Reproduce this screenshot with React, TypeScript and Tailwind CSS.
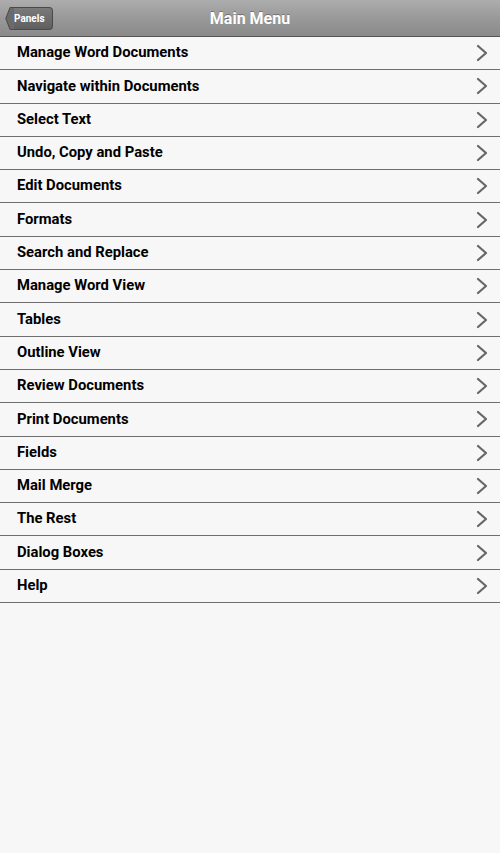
const items = [
  'Manage Word Documents',
  'Navigate within Documents',
  'Select Text',
  'Undo, Copy and Paste',
  'Edit Documents',
  'Formats',
  'Search and Replace',
  'Manage Word View',
  'Tables',
  'Outline View',
  'Review Documents',
  'Print Documents',
  'Fields',
  'Mail Merge',
  'The Rest',
  'Dialog Boxes',
  'Help',
];

function Chevron() {
  return (
    <svg width="12" height="18" viewBox="0 0 12 18" className="mr-[12px]">
      <path d="M2 2 L10 9 L2 16" fill="none" stroke="#666" strokeWidth="2.2" strokeLinecap="round" strokeLinejoin="round" />
    </svg>
  );
}

export default function App() {
  return (
    <div className="w-[500px] h-[853px] bg-[#f7f7f7] flex flex-col" style={{ fontFamily: 'Roboto, "Noto Sans", sans-serif' }}>
      {/* Header */}
      <div className="relative h-[37px] shrink-0 flex items-center justify-center bg-gradient-to-b from-[#adadad] via-[#999999] to-[#8a8a8a] border-b border-[#555]">
        <button className="absolute left-[5px] top-[7px] h-[23px] flex items-center">
          <svg width="10" height="23" viewBox="0 0 10 23" className="-mr-px">
            <path d="M10 0.5 L5 0.5 L0.8 11.5 L5 22.5 L10 22.5" fill="#6a6a6a" stroke="#4a4a4a" strokeWidth="1" />
          </svg>
          <span className="h-[23px] pr-[7px] flex items-center rounded-r-[4px] bg-gradient-to-b from-[#7a7a7a] to-[#5f5f5f] border border-l-0 border-[#4a4a4a] text-white text-[10px] font-bold">
            Panels
          </span>
        </button>
        <span className="text-white text-[16px] font-bold leading-none mt-[1px] [text-shadow:0_-1px_0_rgba(0,0,0,0.3)]">Main Menu</span>
      </div>

      {/* Menu list */}
      <div className="flex flex-col">
        {items.map((item) => (
          <div key={item} className="h-[33.3px] flex items-center justify-between border-b border-[#6f6f6f] pl-[17px]">
            <span className="text-[14.8px] font-bold text-black leading-none -mt-[1px]">{item}</span>
            <Chevron />
          </div>
        ))}
      </div>
    </div>
  );
}
